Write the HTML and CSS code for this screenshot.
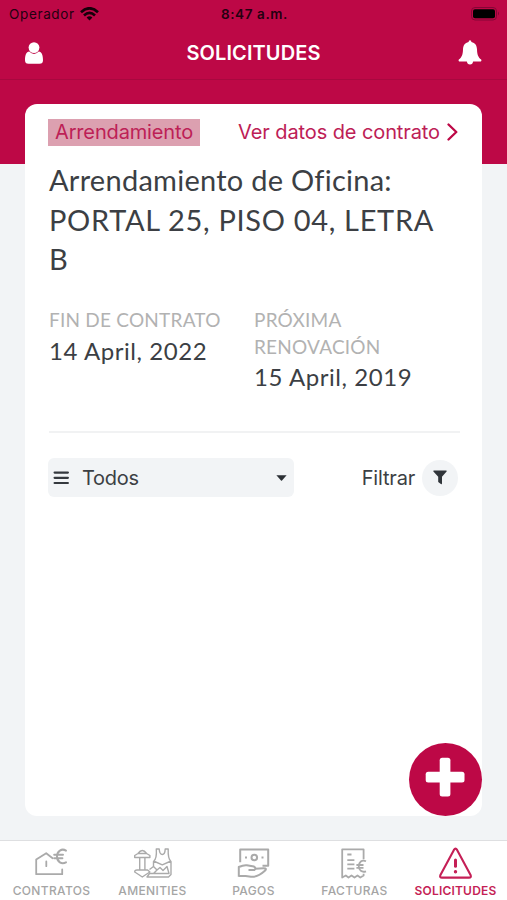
FILE: index.html
```html
<!DOCTYPE html>
<html lang="es">
<head>
<meta charset="utf-8">
<meta name="viewport" content="width=device-width, initial-scale=1">
<title>Solicitudes</title>
<link rel="stylesheet" href="styles.css">
</head>
<body>
<div class="app">
  <header class="top">
    <div class="status">
      <div class="carrier"><span>Operador</span>
        <svg width="19" height="14" viewBox="0 0 19 14" fill="none" stroke="#16000a" stroke-width="2.7"><path d="M1 5.2Q9.5-2.6 18 5.2M4 8.4Q9.5 3.4 15 8.4"/><path d="M6.6 10.6Q9.5 8.1 12.4 10.6L9.5 13.6Z" fill="#16000a" stroke="none"/></svg>
      </div>
      <span class="time">8:47 a.m.</span>
      <svg class="battery" width="29" height="14" viewBox="0 0 29 14"><rect x=".5" y=".5" width="25" height="12.5" rx="3.5" fill="none" stroke="#850536"/><rect x="2" y="2.2" width="22" height="9" rx="2" fill="#000"/><path d="M27 4.5Q29 6.5 27 8.5Z" fill="#850536"/></svg>
    </div>
    <div class="nav">
      <svg width="18" height="22" viewBox="0 0 18 22" fill="#fff"><circle cx="9" cy="5.6" r="5.4"/><path d="M4.2 9.6C1.3 10.1 0 13.2 0 18.2Q0 21.7 3.5 21.7H14.5Q18 21.7 18 18.2C18 13.2 16.7 10.1 13.8 9.6Q9 14.2 4.2 9.6Z"/></svg>
      <h1>SOLICITUDES</h1>
      <svg width="24" height="25" viewBox="0 0 24 25" fill="#fff"><path d="M10.6 2Q10.6.3 12 .3T13.4 2C17.3 2.8 18.8 5.6 19 9.2C19.2 14.6 20 16.9 23.2 19.6Q24 21.6 22 21.6H2Q0 21.6.8 19.6C4 16.9 4.8 14.6 5 9.2C5.2 5.6 6.7 2.8 10.6 2Z"/><path d="M8.8 21H15.2Q14.8 24.5 12 24.5T8.8 21Z"/></svg>
    </div>
  </header>
  <main class="content">
    <section class="card">
      <div class="links">
        <span class="tag">Arrendamiento</span>
        <a class="more"><span>Ver datos de contrato</span><svg width="11" height="18" viewBox="0 0 11 18" fill="none" stroke="#bd0846" stroke-width="2.3" stroke-linecap="round" stroke-linejoin="round"><path d="M1.5 1.5 9.3 9 1.5 16.5"/></svg></a>
      </div>
      <h2><span class="intro">Arrendamiento de Oficina:</span><br>PORTAL 25, PISO 04, LETRA<br>B</h2>
      <dl class="dates">
        <div><dt>FIN DE CONTRATO</dt><dd>14 April, 2022</dd></div>
        <div><dt>PRÓXIMA RENOVACIÓN</dt><dd>15 April, 2019</dd></div>
      </dl>
      <div class="filters">
        <div class="select">
          <svg width="16" height="14" viewBox="0 0 16 14" stroke="#35393e" stroke-width="2.2" stroke-linecap="round"><path d="M1.6 1.6H14.9M1.6 6.8H14.9M1.6 12H14.9"/></svg>
          <span>Todos</span>
          <svg class="caret" width="11" height="6" viewBox="0 0 11 6"><path d="M.4.3H10.6L6 5.5Q5.5 6 5 5.5Z" fill="#2b2f34"/></svg>
        </div>
        <div class="filter"><span>Filtrar</span><i><svg width="14" height="15" viewBox="0 0 14 15"><path d="M.7.6H13.3Q14 .9 13.6 1.5L9 6.7V13.6Q8.8 14.7 7.9 14.1L5.2 12V6.7L.4 1.5Q0 .9.7.6Z" fill="#30353a"/></svg></i></div>
      </div>
      <button class="fab" aria-label="+"><svg width="40" height="40" viewBox="0 0 40 40" fill="#fff"><rect x="14.7" y=".7" width="10.7" height="38.8" rx="2.5"/><rect x=".7" y="14.8" width="38.8" height="10.7" rx="2.5"/></svg></button>
    </section>
  </main>
  <nav class="tabs">
    <a><svg width="34" height="34" viewBox="0 0 34 34" fill="none" stroke="#aaa" stroke-width="1.8" stroke-linecap="round" stroke-linejoin="round"><path d="M17.6 12.2 11.2 7.2 1.2 13.6V28.2H27.2V23.5M11.3 15.5V20.2"/><path d="M31 4.6C26.7 2 22 5.1 22 10.5S26.7 18.7 31 16.3M19.2 8.8H28M19.2 12.3H27.4" stroke-width="2"/></svg><span>CONTRATOS</span></a>
    <a><svg width="40" height="34" viewBox="0 0 40 34" fill="none" stroke="#aaa" stroke-width="1.4" stroke-linejoin="round"><path d="M1.7 11.5V9.5L5 7.5Q9.3 1.5 13.6 7.5L16.9 9.5V11.5ZM6.7 11.5H11.9V24H6.7ZM1.7 26Q1.7 24 4 24H14.6L16.9 26 13 28.5 9.3 31 5.6 28.5ZM5 7.5H13.6"/><path d="M20.5 20.5V15.5Q24 13 23.3 3H26.2Q26.6 8.5 29.3 8.5T32.2 3H35.2Q34.8 13 38 15.5V28.5L35.5 31H14L16.5 27.5H20.5L24 24 27 21.5 30 24.5 34 20.5 36 27.5H21M20.5 15 29.3 18.8 38 15M16.5 23.5 20.5 20.5 24 24"/></svg><span>AMENITIES</span></a>
    <a><svg width="34" height="34" viewBox="0 0 34 34" fill="none" stroke="#aaa" stroke-width="2" stroke-linejoin="round"><path d="M3.2 16.2V3.5H31.2V19.7H25.5"/><circle cx="17.3" cy="11.5" r="2.8"/><path d="M9 10.4V12.4M25.5 10.4V12.4"/><path d="M1.8 30.8V21Q6.5 18.8 9.8 19.2L17 20.6Q20 22.6 17.2 24H11.5M18.3 22.8 26.5 22.3Q30.7 22.2 27.6 25.1C22.5 29.7 19.2 31.3 14 30.8L8.6 30H1.8"/></svg><span>PAGOS</span></a>
    <a><svg width="30" height="34" viewBox="0 0 30 34" fill="none" stroke="#aaa" stroke-width="1.8" stroke-linejoin="round"><path d="M23.6 13.2V3.3H2.2V31.5L5.8 29.5 8.5 31.5 11.5 29.5 14.5 31.5 17.5 29.5 20.3 31.5 23.6 29.5V27.8M7.3 8.5H11.5M7.3 14.2H14.4M7.3 18.4H14.4M7.3 22.6H14.4M26 15.3C21.8 13.3 18.8 16.3 18.8 20.2S21.8 26.9 26 25.3M16.4 19H23.5M16.4 21.8H23.5"/></svg><span>FACTURAS</span></a>
    <a class="active"><svg width="36" height="34" viewBox="0 0 36 34" fill="none" stroke="#c51f56" stroke-width="2.1" stroke-linejoin="round" stroke-linecap="round"><path d="M15.9 3.9Q17.5 1.4 19.1 3.9L32.7 29.3Q33.5 31.6 31 31.6H4Q1.5 31.6 2.3 29.3Z"/><path d="M17.5 14V20.3" stroke-width="3"/><circle cx="17.5" cy="25.7" r="1.1" fill="#c51f56" stroke-width="1.2"/></svg><span>SOLICITUDES</span></a>
  </nav>
</div>
</body>
</html>
```
FILE: styles.css
```css
* { box-sizing: border-box; }
body { margin: 0; font-family: Inter, "Liberation Sans", sans-serif; color: #3c3f44; }
svg { display: block; flex: none; }
.app { width: 507px; height: 900px; display: flex; flex-direction: column; overflow: hidden; background: #f2f4f6; }
.top { height: 80px; background: #bd0846; border-bottom: 1px solid #a8083f; flex: none; }
.status { height: 26px; display: grid; grid-template-columns: 1fr auto 1fr; align-items: center; padding: 1px 7px 0 9px; font-size: 13.5px; color: #240010; }
.carrier { display: flex; gap: 5px; align-items: center; letter-spacing: .65px; }
.time { font-weight: 600; letter-spacing: .6px; }
.battery { justify-self: end; }
.nav { height: 53px; padding: 0 25px; display: flex; align-items: center; justify-content: space-between; }
h1 { margin: 0 0 0 6px; color: #fff; font-size: 20px; line-height: 24px; font-weight: 600; letter-spacing: .1px; }
.content { flex: 1; padding: 24px 25px; background: linear-gradient(#bd0846 84.5px, #f2f4f6 84.5px); }
.card { position: relative; height: 712px; border-radius: 12px; background: #fff; padding: 14px 22px 0 24px; }
.links { height: 28px; display: flex; justify-content: space-between; align-items: center; font-size: 20px; line-height: 27px; color: #bd2056; }
.tag { background: #dca0b0; height: 27px; width: 152px; margin-left: -1px; text-align: center; letter-spacing: -.15px; }
.more { display: flex; align-items: center; gap: 7px; margin-right: 2px; letter-spacing: -.1px; }
h2 { margin: 14px 0 0; font: 400 29px/39.7px Lato, sans-serif; letter-spacing: .68px; white-space: nowrap; }
.intro { letter-spacing: .26px; }
.dates { margin: 28px 0 0; display: grid; grid-template-columns: 205px 170px; height: 124px; font-family: Lato, sans-serif; }
dt { font-size: 19px; line-height: 26.4px; letter-spacing: .22px; color: #b2b2b2; }
dd { margin: 0; font-size: 24px; line-height: 33px; letter-spacing: .57px; }
.filters { border-top: 2px solid #f1f2f3; padding-top: 25px; display: flex; justify-content: space-between; align-items: flex-start; font-size: 20px; }
.select { width: 246px; height: 39px; border-radius: 6px; background: #f2f4f6; display: flex; align-items: center; padding: 0 7px 0 5px; gap: 13px; margin-left: -1px; letter-spacing: -.3px; }
.caret { margin-left: auto; }
.filter { height: 39px; display: flex; align-items: center; gap: 7px; margin-right: 2px; letter-spacing: -.2px; }
.filter i { width: 36px; height: 36px; border-radius: 50%; background: #f2f4f6; display: flex; align-items: center; justify-content: center; }
.fab { position: absolute; right: 0; bottom: 0; width: 73px; height: 73px; border: 0; padding: 0 1px 5px 0; border-radius: 50%; background: #bd0846; display: flex; align-items: center; justify-content: center; }
.tabs { height: 60px; flex: none; background: #fff; border-top: 1px solid #dedfe1; display: grid; grid-template-columns: repeat(5, 101px); padding: 5px 0 0 1px; font-size: 12px; letter-spacing: .35px; font-weight: 500; color: #a5a5a5; }
.tabs a { display: flex; flex-direction: column; align-items: center; gap: 3px; line-height: 16px; }
.tabs .active { color: #c51f56; font-weight: 600; letter-spacing: .2px; }
```
